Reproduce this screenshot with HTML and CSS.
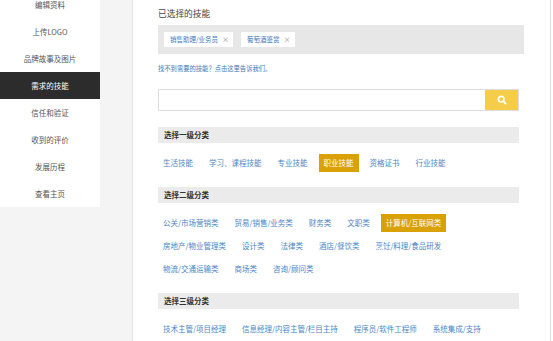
FILE: index.html
```html
<!DOCTYPE html>
<html lang="zh-CN">
<head>
<meta charset="utf-8">
<link rel="stylesheet" href="styles.css">
</head>
<body>
<div class="page">
  <aside class="side">
    <ul class="menu">
      <li>编辑资料</li>
      <li>上传LOGO</li>
      <li>品牌故事及图片</li>
      <li class="active">需求的技能</li>
      <li>信任和验证</li>
      <li>收到的评价</li>
      <li>发展历程</li>
      <li>查看主页</li>
    </ul>
  </aside>
  <main class="main">
    <h2 class="title">已选择的技能</h2>
    <div class="picked">
      <span class="tag">销售助理/业务员<span class="x">×</span></span>
      <span class="tag">葡萄酒鉴赏<span class="x">×</span></span>
    </div>
    <a class="hint">找不到需要的技能？点击这里告诉我们。</a>
    <div class="search">
      <input class="search-input" type="text">
      <button class="search-btn" type="button">
        <svg width="10" height="10" viewBox="0 0 10 10"><circle cx="4.2" cy="4.2" r="2.8" fill="none" stroke="#fff" stroke-width="1.6"/><line x1="6.2" y1="6.2" x2="8.6" y2="8.6" stroke="#fff" stroke-width="1.8" stroke-linecap="round"/></svg>
      </button>
    </div>

    <div class="bar">选择一级分类</div>
    <div class="opts">
      <span class="opt">生活技能</span>
      <span class="opt">学习、课程技能</span>
      <span class="opt">专业技能</span>
      <span class="opt on">职业技能</span>
      <span class="opt">资格证书</span>
      <span class="opt">行业技能</span>
    </div>

    <div class="bar">选择二级分类</div>
    <div class="opts">
      <span class="opt">公关/市场营销类</span>
      <span class="opt">贸易/销售/业务类</span>
      <span class="opt">财务类</span>
      <span class="opt">文职类</span>
      <span class="opt on">计算机/互联网类</span>
      <span class="opt">房地产/物业管理类</span>
      <span class="opt">设计类</span>
      <span class="opt">法律类</span>
      <span class="opt">酒店/餐饮类</span>
      <span class="opt">烹饪/料理/食品研发</span>
      <span class="opt">物流/交通运输类</span>
      <span class="opt">商场类</span>
      <span class="opt">咨询/顾问类</span>
    </div>

    <div class="bar">选择三级分类</div>
    <div class="opts">
      <span class="opt">技术主管/项目经理</span>
      <span class="opt">信息经理/内容主管/栏目主持</span>
      <span class="opt">程序员/软件工程师</span>
      <span class="opt">系统集成/支持</span>
    </div>
  </main>
</div>
</body>
</html>
```

FILE: styles.css
```css
* { box-sizing: border-box; }
html, body {
  margin: 0;
  padding: 0;
  background: #fff;
  font-family: "Noto Sans CJK SC", "Microsoft YaHei", sans-serif;
  overflow: hidden;
}
.page {
  display: flex;
  width: 553px;
  height: 341px;
  overflow: hidden;
}
.side {
  width: 133px;
  flex: none;
  background: #f4f4f4;
  border-right: 1px solid #e4e4e4;
}
.menu {
  list-style: none;
  margin: -9px 0 0 0;
  padding: 0;
  width: 100px;
  background: #fff;
}
.menu li {
  height: 27px;
  line-height: 27px;
  text-align: center;
  font-size: 7.5px;
  color: #555;
}
.menu li.active {
  background: #2c2c2c;
  color: #fff;
}
.main {
  width: 418px;
  flex: none;
  background: #fff;
  border-right: 1px solid #dcdcdc;
  padding: 8px 0 0 25px;
}
.title {
  margin: 0;
  font-size: 8.7px;
  font-weight: normal;
  line-height: 12px;
  height: 12px;
  color: #444;
}
.picked {
  margin-top: 5px;
  width: 366px;
  height: 29px;
  background: #e7e7e7;
  padding: 7px 6px;
  display: flex;
  gap: 8px;
}
.tag {
  height: 15px;
  background: #fff;
  display: flex;
  align-items: center;
  gap: 4px;
  padding: 0 4px 0 6px;
  font-size: 6.5px;
  color: #3e78b8;
  line-height: 15px;
}
.tag .x {
  color: #888;
  font-size: 7px;
}
.hint {
  display: block;
  margin-top: 10px;
  height: 10px;
  line-height: 10px;
  font-size: 6.3px;
  color: #3e78b8;
}
.search {
  margin-top: 15px;
  width: 361px;
  height: 22px;
  display: flex;
  border: 1px solid #dedede;
}
.search-input {
  flex: 1;
  border: 0;
  margin: 0;
  padding: 0;
  outline: none;
  background: #fff;
}
.search-btn {
  width: 33px;
  height: 20px;
  border: 0;
  margin: 0;
  padding: 0;
  background: #f6cd48;
  display: flex;
  align-items: center;
  justify-content: center;
}
.bar {
  margin-top: 16px;
  width: 361px;
  height: 16px;
  line-height: 16px;
  background: #ebebeb;
  padding-left: 6px;
  font-size: 7.5px;
  font-weight: bold;
  color: #333;
}
.opts {
  margin-top: 11px;
  width: 330px;
  display: flex;
  flex-wrap: wrap;
  column-gap: 6px;
  row-gap: 5px;
  margin-bottom: -1px;
}
.opt {
  height: 18px;
  line-height: 18px;
  padding: 0 5px;
  font-size: 7.5px;
  color: #4a86c6;
  white-space: nowrap;
}
.opt.on {
  background: #d9a104;
  color: #fff;
}
```
